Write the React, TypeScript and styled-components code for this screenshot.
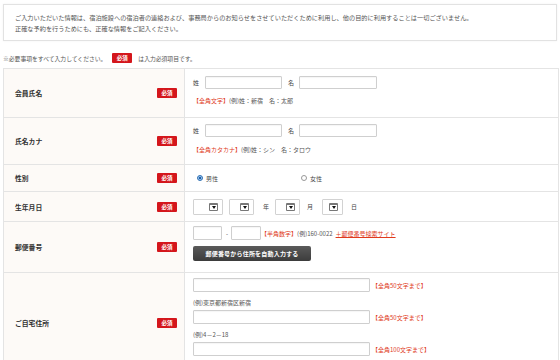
import styled, { createGlobalStyle } from 'styled-components'

const GlobalStyle = createGlobalStyle`
  html, body {
    margin: 0;
    padding: 0;
    background: #ffffff;
  }
  body {
    font-family: 'Noto Sans CJK JP', 'Noto Sans', sans-serif;
    color: #444;
    width: 560px;
    height: 360px;
    overflow: hidden;
  }
`

const Page = styled.div`
  padding: 4px 3px 0 3px;
`

const Notice = styled.div`
  border: 1px solid #e2e2e2;
  box-shadow: 0 0 2px rgba(0, 0, 0, 0.06);
  padding: 7px 11px 6px;
  font-size: 6.2px;
  line-height: 11px;
  color: #555;
`

const Required = styled.div`
  display: flex;
  align-items: center;
  gap: 6px;
  margin-top: 11px;
  font-size: 5.8px;
  color: #555;
  height: 12px;
`

const Badge = styled.span`
  display: inline-flex;
  align-items: center;
  justify-content: center;
  width: 20px;
  height: 10px;
  background: #d4161c;
  color: #fff;
  font-size: 5.5px;
  font-weight: 700;
  border-radius: 1px;
`

const Table = styled.div`
  margin-top: 4px;
  border-top: 1px solid #e4e4e4;
  border-left: 1px solid #e4e4e4;
  border-right: 1px solid #e4e4e4;
  width: 554px;
`

const Row = styled.div<{ $h: number }>`
  display: grid;
  grid-template-columns: 181px 1fr;
  min-height: ${p => p.$h}px;
  border-bottom: 1px solid #e4e4e4;
`

const Label = styled.div`
  display: flex;
  align-items: center;
  justify-content: space-between;
  padding: 0 7px 0 11px;
  background: #fdfaf7;
  border-right: 1px solid #e4e4e4;
  font-size: 6.8px;
  font-weight: 700;
  color: #333;
`

const Cell = styled.div<{ $pt?: number }>`
  display: flex;
  flex-direction: column;
  justify-content: ${p => (p.$pt === undefined ? 'center' : 'flex-start')};
  padding: ${p => p.$pt ?? 0}px 8px 0 8px;
  font-size: 6px;
  color: #444;
`

const Line = styled.div<{ $gap?: number; $mt?: number }>`
  display: flex;
  align-items: center;
  gap: ${p => p.$gap ?? 6}px;
  margin-top: ${p => p.$mt ?? 0}px;
  min-height: 12px;
`

const Small = styled.span<{ $w?: number }>`
  display: inline-block;
  width: ${p => (p.$w ? `${p.$w}px` : 'auto')};
  font-size: 6px;
  color: #444;
`

const TextBox = styled.div<{ $w: number; $h?: number }>`
  width: ${p => p.$w}px;
  height: ${p => p.$h ?? 13}px;
  border: 1px solid #cfcfcf;
  border-radius: 1px;
  background: #fff;
  box-sizing: border-box;
  box-shadow: inset 0 1px 1px rgba(0, 0, 0, 0.04);
`

const Note = styled.span`
  color: #e03a1c;
  font-size: 6px;
`

const Example = styled.span`
  color: #555;
  font-size: 6px;
`

const NoteLink = styled.span`
  color: #e03a1c;
  font-size: 6px;
  text-decoration: underline;
`

const Radio = styled.span<{ $on?: boolean }>`
  display: inline-block;
  width: 6px;
  height: 6px;
  border-radius: 50%;
  border: 1px solid ${p => (p.$on ? '#2d6fb3' : '#999')};
  background: ${p => (p.$on ? 'radial-gradient(circle, #1f5fa8 0 40%, #9cc6ee 45%)' : '#fff')};
  box-sizing: border-box;
`

const RadioItem = styled.label<{ $w?: number }>`
  display: inline-flex;
  align-items: center;
  gap: 3px;
  width: ${p => (p.$w ? `${p.$w}px` : 'auto')};
  font-size: 6px;
  color: #444;
`

const Select = styled.div<{ $w: number }>`
  display: flex;
  align-items: center;
  justify-content: flex-end;
  width: ${p => p.$w}px;
  height: 16px;
  padding-right: 4px;
  border: 1px solid #d2d2d2;
  border-radius: 1px;
  background: #fff;
  box-sizing: border-box;
`

const Arrow = styled.span`
  display: flex;
  align-items: flex-end;
  justify-content: center;
  width: 9px;
  height: 8px;
  padding-bottom: 1px;
  border: 1px solid #777;
  border-top-width: 2px;
  border-radius: 1px;
  box-sizing: border-box;
  &::after {
    content: '';
    border-left: 2px solid transparent;
    border-right: 2px solid transparent;
    border-top: 3px solid #111;
  }
`

const Button = styled.div`
  display: inline-flex;
  align-items: center;
  justify-content: center;
  width: 118px;
  height: 15px;
  background: linear-gradient(#5a5a5a, #3c3c3c);
  border-radius: 2px;
  color: #fff;
  font-size: 6px;
  font-weight: 700;
  letter-spacing: 0.2px;
`

function Field({ label, children, h, pt }: { label: string; children: React.ReactNode; h: number; pt?: number }) {
  return (
    <Row $h={h}>
      <Label>
        {label}
        <Badge>必須</Badge>
      </Label>
      <Cell $pt={pt}>{children}</Cell>
    </Row>
  )
}

export default function App() {
  return (
    <>
      <GlobalStyle />
      <Page>
        <Notice>
          <div>
            ご入力いただいた情報は、宿泊施設への宿泊者の連絡および、事務局からのお知らせをさせていただくために利用し、他の目的に利用することは一切ございません。
          </div>
          <div>正確な予約を行うためにも、正確な情報をご記入ください。</div>
        </Notice>
        <Required>
          ※必要事項をすべて入力してください。
          <Badge>必須</Badge>
          は入力必須項目です。
        </Required>
        <Table>
          <Field label='会員氏名' h={48} pt={7}>
            <Line $gap={0}>
              <Small $w={12}>姓</Small>
              <TextBox $w={77} />
              <Small $w={11} style={{ marginLeft: 6 }}>名</Small>
              <TextBox $w={78} />
            </Line>
            <Line $mt={5} $gap={0}>
              <Note>【全角文字】</Note>
              <Example>(例)姓：新宿　名：太郎</Example>
            </Line>
          </Field>
          <Field label='氏名カナ' h={46} pt={6}>
            <Line $gap={0}>
              <Small $w={12}>姓</Small>
              <TextBox $w={77} />
              <Small $w={11} style={{ marginLeft: 6 }}>名</Small>
              <TextBox $w={78} />
            </Line>
            <Line $mt={6} $gap={0}>
              <Note>【全角カタカナ】</Note>
              <Example>(例)姓：シン　名：タロウ</Example>
            </Line>
          </Field>
          <Field label='性別' h={26}>
            <Line $gap={0} style={{ paddingLeft: 4 }}>
              <RadioItem $w={104}>
                <Radio $on />
                男性
              </RadioItem>
              <RadioItem>
                <Radio />
                女性
              </RadioItem>
            </Line>
          </Field>
          <Field label='生年月日' h={29}>
            <Line $gap={0}>
              <Select $w={30}>
                <Arrow />
              </Select>
              <Select $w={25} style={{ marginLeft: 6 }}>
                <Arrow />
              </Select>
              <Small style={{ margin: '0 6px 0 9px' }}>年</Small>
              <Select $w={25}>
                <Arrow />
              </Select>
              <Small style={{ margin: '0 9px 0 7px' }}>月</Small>
              <Select $w={21}>
                <Arrow />
              </Select>
              <Small style={{ marginLeft: 8 }}>日</Small>
            </Line>
          </Field>
          <Field label='郵便番号' h={50} pt={4}>
            <Line $gap={0}>
              <TextBox $w={29} $h={14} />
              <Small style={{ margin: '0 3px 0 4px' }}>-</Small>
              <TextBox $w={30} $h={14} />
              <Note>【半角数字】</Note>
              <Example>(例)160-0022</Example>
              <NoteLink style={{ marginLeft: 3 }}>＋郵便番号検索サイト</NoteLink>
            </Line>
            <Line $mt={6}>
              <Button>郵便番号から住所を自動入力する</Button>
            </Line>
          </Field>
          <Field label='ご自宅住所' h={100} pt={5}>
            <Line $gap={2}>
              <TextBox $w={177} $h={14} />
              <Note>【全角50文字まで】</Note>
            </Line>
            <Line $mt={4}>
              <Example>(例)東京都新宿区新宿</Example>
            </Line>
            <Line $gap={2} $mt={2}>
              <TextBox $w={177} $h={14} />
              <Note>【全角50文字まで】</Note>
            </Line>
            <Line $mt={4}>
              <Example>(例)4－2－18</Example>
            </Line>
            <Line $gap={2} $mt={2}>
              <TextBox $w={177} $h={14} />
              <Note>【全角100文字まで】</Note>
            </Line>
          </Field>
        </Table>
      </Page>
    </>
  )
}
